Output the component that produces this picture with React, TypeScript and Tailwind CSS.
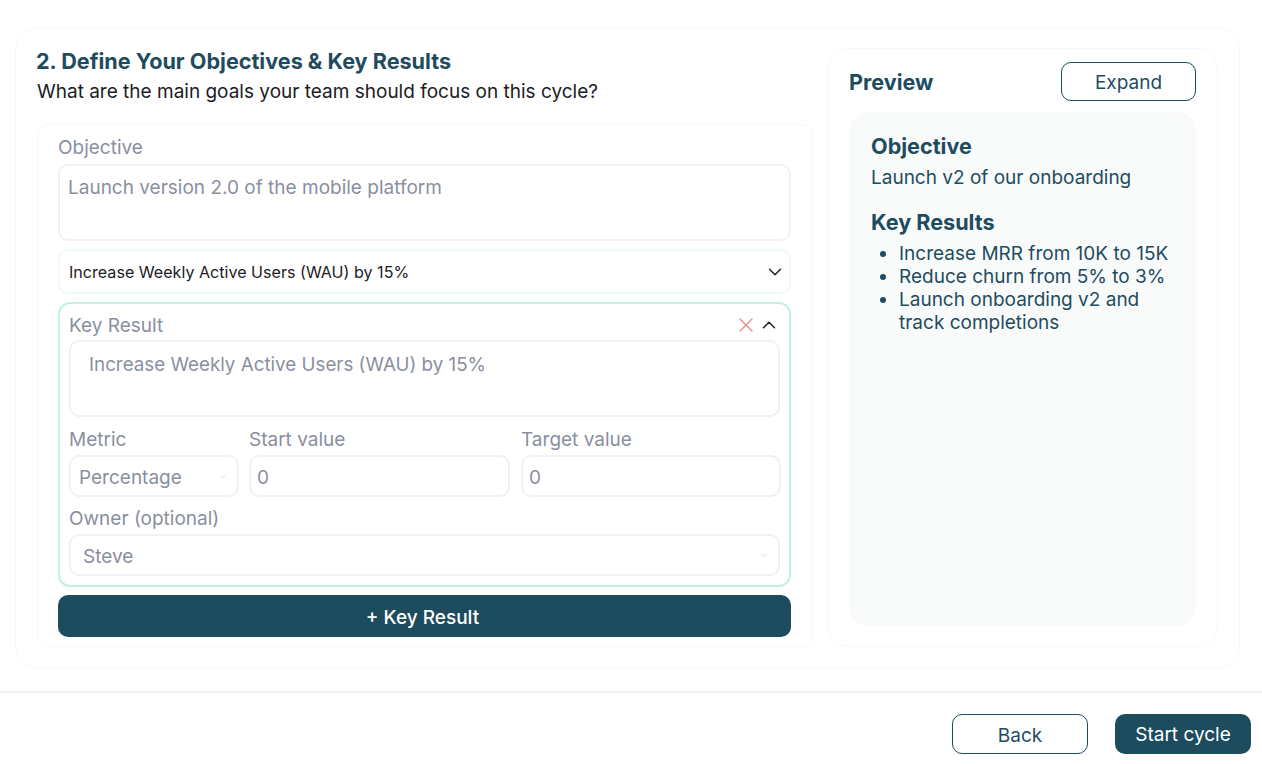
import { ChevronDown, ChevronUp, X } from "lucide-react"

const labelCls = "block text-[19px] leading-[24px] text-[#8a8f9f]"
const fieldCls = "rounded-[10px] border-2 border-[#edf2f4] bg-white text-[19px] text-[#8a8f9f]"

function Field({ label, value, className }: { label: string; value: string; className: string }) {
  return (
    <div className={className}>
      <span className={labelCls}>{label}</span>
      <div className={`mt-[3px] flex h-[42px] items-center px-[6px] pt-[5px] ${fieldCls}`}>{value}</div>
    </div>
  )
}

function SelectField({ label, value, className, pad }: { label: string; value: string; className: string; pad: string }) {
  return (
    <div className={className}>
      <span className={labelCls}>{label}</span>
      <div className={`mt-[3px] flex h-[42px] items-center justify-between ${pad} pr-[10px] ${fieldCls}`}>
        <span className="mt-[5px]">{value}</span>
        <ChevronDown size={9} className="text-[#c9ced6]" />
      </div>
    </div>
  )
}

export default function App() {
  return (
    <div className="h-[764px] w-[1262px] overflow-hidden bg-white font-['Inter',sans-serif]">
      {/* main card */}
      <div className="ml-[15px] mt-[27px] flex h-[642px] w-[1225px] gap-[15px] rounded-[24px] border border-[#f7f8f9] pb-[21px] pl-[21px] pr-[21px] pt-[20px]">
        <div className="flex w-[776px] shrink-0 flex-col">
          <h2 className="-ml-px h-[26px] text-[21.6px] font-bold leading-[26px] text-[#1e4c5f]">
            2. Define Your Objectives &amp; Key Results
          </h2>
          <p className="mt-[5px] text-[19px] leading-[26px] text-[#1c2024]">
            What are the main goals your team should focus on this cycle?
          </p>

          <div className="mt-[19px] flex-1 rounded-[12px] border border-[#f7f8f9] pl-[20px] pr-[21px] pt-[11px]">
            <span className={labelCls}>Objective</span>
            <div className={`mt-[4px] h-[77px] px-[8px] pt-[9px] leading-[26px] ${fieldCls}`}>
              Launch version 2.0 of the mobile platform
            </div>

            <div className="mt-[8px] flex h-[45px] items-center justify-between rounded-[10px] border-2 border-[#eefaf7] pl-[9px] pr-[3px] text-[16.1px] text-[#1c2024]">
              <span className="mt-[2px]">Increase Weekly Active Users (WAU) by 15%</span>
              <ChevronDown size={22} strokeWidth={1.6} className="text-[#1c2024]" />
            </div>

            {/* key result */}
            <div className="mt-[8px] h-[285px] rounded-[12px] border-2 border-[#c3f0e4] px-[9px] pt-[10px]">
              <div className="flex h-[24px] items-center justify-between">
                <span className={labelCls}>Key Result</span>
                <div className="-mt-[2px] flex items-center">
                  <X size={24} strokeWidth={1.3} className="text-[#e88a8a]" />
                  <ChevronUp size={22} strokeWidth={1.6} className="text-[#1c2024]" />
                </div>
              </div>
              <div className={`mt-[2px] h-[77px] pl-[18px] pt-[10px] !text-[18.8px] leading-[26px] ${fieldCls}`}>
                Increase Weekly Active Users (WAU) by 15%
              </div>
              <div className="mt-[11px] flex">
                <SelectField label="Metric" value="Percentage" className="w-[170px] shrink-0" pad="pl-[8px]" />
                <Field label="Start value" value="0" className="ml-[10px] w-[261px] shrink-0" />
                <Field label="Target value" value="0" className="ml-[11px] w-[260px] shrink-0" />
              </div>
              <SelectField label="Owner (optional)" value="Steve" className="mt-[10px]" pad="pl-[12px]" />
            </div>

            <button className="mt-[8px] flex h-[42px] w-full items-center justify-center rounded-[10px] bg-[#1e4c5f] pr-[4px] pt-[4px] text-[19px] font-medium text-white">
              + Key Result
            </button>
          </div>
        </div>

        {/* preview */}
        <div className="flex w-[390px] shrink-0 flex-col rounded-[20px] border border-[#f7f8f9] pb-[20px] pl-[20px] pr-[21px] pt-[13px]">
          <div className="flex h-[39px] items-center justify-between">
            <span className="pt-[2px] text-[21.6px] font-bold text-[#1e4c5f]">Preview</span>
            <button className="h-[39px] w-[135px] rounded-[10px] border-[1.5px] border-[#1e4c5f] pt-[4px] text-[19px] text-[#1e4c5f]">
              Expand
            </button>
          </div>
          <div className="mt-[11px] flex-1 rounded-[20px] bg-[#f9fbfb] px-[22px] pt-[20px] text-[#1e4c5f]">
            <h3 className="text-[21.6px] font-bold leading-[28px]">Objective</h3>
            <p className="mt-[5px] text-[19px] leading-[26px]">Launch v2 of our onboarding</p>
            <h3 className="mt-[17px] text-[21.6px] font-bold leading-[28px]">Key Results</h3>
            <ul className="mt-[6px] list-disc pl-[28px] text-[19px] leading-[23px]">
              <li>Increase MRR from 10K to 15K</li>
              <li>Reduce churn from 5% to 3%</li>
              <li>Launch onboarding v2 and track completions</li>
            </ul>
          </div>
        </div>
      </div>

      {/* footer */}
      <div className="mt-[22px] flex h-[73px] items-start justify-end gap-[27px] border-t-2 border-[#eef1f4] pr-[11px] pt-[21px]">
        <button className="h-[40px] w-[136px] rounded-[10px] border-[1.5px] border-[#1e4c5f] pt-[4px] text-[19px] text-[#1e4c5f]">
          Back
        </button>
        <button className="h-[40px] w-[136px] rounded-[10px] bg-[#1e4c5f] pt-[3px] text-[19px] text-white">
          Start cycle
        </button>
      </div>
    </div>
  )
}
